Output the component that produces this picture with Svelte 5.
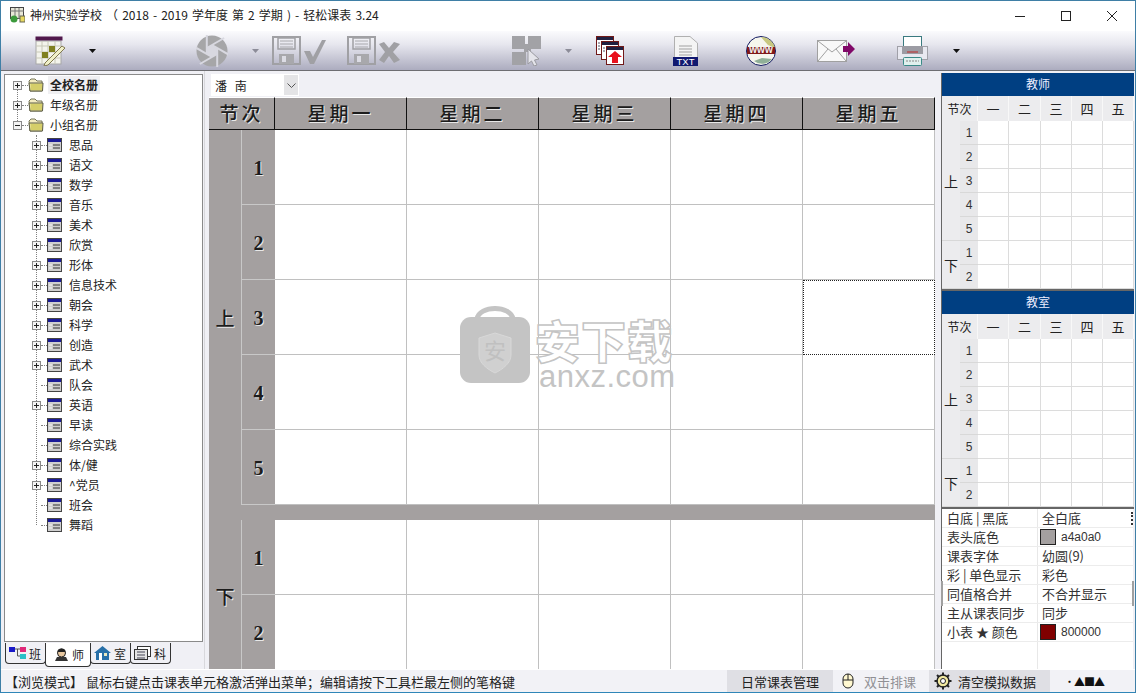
<script>
  const groups = [
    { name: '思品', plus: true }, { name: '语文', plus: true }, { name: '数学', plus: true },
    { name: '音乐', plus: true }, { name: '美术', plus: true }, { name: '欣赏', plus: true },
    { name: '形体', plus: true }, { name: '信息技术', plus: true }, { name: '朝会', plus: true },
    { name: '科学', plus: true }, { name: '创造', plus: true }, { name: '武术', plus: true },
    { name: '队会', plus: false }, { name: '英语', plus: true }, { name: '早读', plus: false },
    { name: '综合实践', plus: false }, { name: '体/健', plus: true }, { name: '^党员', plus: true },
    { name: '班会', plus: false }, { name: '舞蹈', plus: false }
  ];
  const roots = [
    { name: '全校名册', open: false, sel: true },
    { name: '年级名册', open: false },
    { name: '小组名册', open: true }
  ];
  const days = ['星期一', '星期二', '星期三', '星期四', '星期五'];
  const shortDays = ['一', '二', '三', '四', '五'];
  const cells = [0, 1, 2, 3, 4];
  const props = [
    { k: '白底 | 黑底', v: '全白底' },
    { k: '表头底色', v: 'a4a0a0', color: '#a4a0a0' },
    { k: '课表字体', v: '幼圆(9)' },
    { k: '彩 | 单色显示', v: '彩色' },
    { k: '同值格合并', v: '不合并显示' },
    { k: '主从课表同步', v: '同步' },
    { k: '小表 ★ 颜色', v: '800000', color: '#800000' }
  ];

  // aperture blades: each gap runs on from a corner of the centre hexagon
  const blades = [0, 1, 2, 3, 4, 5].map((i) => {
    const a = (i * 60 + 30) * Math.PI / 180;
    const b = a + Math.PI * 2 / 3;
    const x = 16 + 6 * Math.cos(a);
    const y = 16 + 6 * Math.sin(a);
    return { x, y, x2: x + 20 * Math.cos(b), y2: y + 20 * Math.sin(b) };
  });
  const hex = [0, 1, 2, 3, 4, 5]
    .map((i) => {
      const a = (i * 60 + 30) * Math.PI / 180;
      return `${16 + 6 * Math.cos(a)},${16 + 6 * Math.sin(a)}`;
    })
    .join(' ');
</script>

{#snippet expander(open)}
  <svg class="exp" width="9" height="9" viewBox="0 0 9 9">
    <rect x="0.5" y="0.5" width="8" height="8" fill="#f4f4f4" stroke="#8a8a8a" />
    <path d="M2 4.5h5" stroke="#222" />
    {#if !open}<path d="M4.5 2v5" stroke="#222" />{/if}
  </svg>
{/snippet}

{#snippet folder()}
  <svg width="16" height="14" viewBox="0 0 16 14">
    <path d="M1 3 L3 1 H7 L9 3 H14 V13 H2 Z" fill="#f4ecc0" stroke="#77775a" />
    <path d="M1 5 H15 L14.5 13 H2 Z" fill="#e6e08a" stroke="#5c5c48" />
    <path d="M3 7h11M3 9h11M3 11h11" stroke="#c4bc48" />
  </svg>
{/snippet}

{#snippet tableIcon()}
  <svg width="15" height="14" viewBox="0 0 15 14">
    <rect x="0.5" y="0.5" width="14" height="13" fill="#cfcfcf" stroke="#444" />
    <rect x="1" y="1" width="13" height="3" fill="#1a1a98" />
    <path d="M6 7h7M6 10h7" stroke="#333" />
    <path d="M2 7h3M2 10h3" stroke="#f4f4f4" />
  </svg>
{/snippet}

{#snippet caret(gray)}
  <svg class="caret" width="7" height="4" viewBox="0 0 7 4"><path d="M0 0h7L3.500 4z" fill={gray ? '#8c8c98' : '#111'} /></svg>
{/snippet}

{#snippet disk(x)}
  <path d="M{x + 1} 1 H{x + 28} V28 H{x + 1} Z" fill="none" stroke="#a0a0a4" stroke-width="2" />
  <path d="M{x + 6} 2 H{x + 23} V13 H{x + 6} Z" fill="none" stroke="#a0a0a4" stroke-width="1.500" />
  <path d="M{x + 8} 5h13M{x + 8} 8h13M{x + 8} 11h13" stroke="#a8a8ac" />
  <path d="M{x + 7} 18 H{x + 22} V28 H{x + 7} Z" fill="#a8a8ac" />
  <rect x={x + 10} y="20" width="4" height="6" fill="#dcdce4" />
{/snippet}

{#snippet miniTable(title)}
  <section class="mini">
    <div class="mini-title">{title}</div>
    <div class="mini-grid">
      <div class="mh first">节次</div>
      {#each shortDays as d}<div class="mh">{d}</div>{/each}
      <div class="mside am">上</div>
      <div class="mside pm">下</div>
      {#each [1, 2, 3, 4, 5, 1, 2] as n}
        <div class="mnum">{n}</div>
        {#each cells as c (c)}<div class="mcell"></div>{/each}
      {/each}
    </div>
  </section>
{/snippet}

<div class="window">
  <header class="titlebar">
    <svg class="appicon" width="16" height="16" viewBox="0 0 16 16">
      <rect x="1.500" y="0.500" width="13" height="11" fill="#e8e8d8" stroke="#444" />
      <path d="M1 4h14M6 1v11M10 1v11" stroke="#777" />
      <rect x="11" y="9" width="5" height="6" fill="#e6d860" stroke="#665" />
      <circle cx="5" cy="12" r="3.500" fill="#3c9a3c" />
    </svg>
    <span class="title">神州实验学校 （ 2018 - 2019 学年度 第 2 学期 ) - 轻松课表 3.24</span>
    <div class="winbtns">
      <svg width="12" height="12" viewBox="0 0 12 12"><path d="M1 6.500h10" stroke="#222" /></svg>
      <svg width="12" height="12" viewBox="0 0 12 12"><rect x="1.500" y="1.500" width="9" height="9" fill="none" stroke="#222" /></svg>
      <svg width="12" height="12" viewBox="0 0 12 12"><path d="M1 1l10 10M11 1L1 11" stroke="#222" /></svg>
    </div>
  </header>

  <div class="toolbar">
    <svg class="t-cal" width="30" height="30" viewBox="0 0 30 30">
      <rect x="1" y="5" width="25" height="23" fill="#f4f4ec" stroke="#a8a8a8" />
      <rect x="0.500" y="0.500" width="27" height="4" fill="#50184c" />
      <path d="M1 10h25M1 16h25M1 22h25M7 5v23M13 5v23M20 5v23" stroke="#c8c8b8" />
      <rect x="7" y="16" width="6" height="6" fill="#808020" />
      <rect x="14" y="10" width="6" height="6" fill="#808020" />
      <path d="M10 27 L27 10 L30 12 L13 29 L9 30 Z" fill="#f0f0c8" stroke="#807850" />
    </svg>
    <span class="t-c1">{@render caret(false)}</span>
    <svg class="t-ap" width="32" height="32" viewBox="0 0 32 32">
      <circle cx="16" cy="16" r="15.500" fill="#a6a6a8" />
      <polygon points={hex} fill="#d8d8e0" />
      {#each blades as b}
        <line x1={b.x} y1={b.y} x2={b.x2} y2={b.y2} stroke="#d8d8e0" stroke-width="2" />
      {/each}
    </svg>
    <span class="t-c2">{@render caret(true)}</span>
    <svg class="t-sv1" width="54" height="29" viewBox="0 0 54 29">
      {@render disk(0)}
      <path d="M32 15 L38 15 L41 21 L50 4 L54 4 L42 28 L38 28 Z" fill="#a0a0a4" />
    </svg>
    <svg class="t-sv2" width="54" height="29" viewBox="0 0 54 29">
      {@render disk(0)}
      <path d="M32 8 L37 6 L42 12 L47 6 L53 8 L46 16 L53 24 L47 27 L42 20 L37 27 L32 24 L38 16 Z" fill="#a0a0a4" />
    </svg>
    <svg class="t-pz" width="32" height="31" viewBox="0 0 32 31">
      <path d="M1 1H14V9H17V1H30V14H20V17H15V30H1V17H13V14H1Z" fill="#a2a2a6" />
      <path d="M17 14 L17 29 L20.500 26 L23 31 L26 30 L23.500 25 L28 24 Z" fill="#e4e4ea" stroke="#9a9aa0" />
    </svg>
    <span class="t-c3">{@render caret(true)}</span>
    <svg class="t-st" width="29" height="30" viewBox="0 0 29 30">
      <rect x="0.500" y="0.500" width="17" height="18" fill="#fff" stroke="#701818" />
      <rect x="1" y="1" width="16" height="3" fill="#202040" />
      <path d="M2 7h14M2 10h14M2 13h14" stroke="#556" stroke-dasharray="2 1" />
      <rect x="5.500" y="5.500" width="17" height="18" fill="#fff" stroke="#701818" />
      <rect x="6" y="6" width="16" height="3" fill="#202040" />
      <path d="M7 12h14M7 15h14" stroke="#556" stroke-dasharray="2 1" />
      <rect x="10.500" y="10.500" width="17" height="18" fill="#fff" stroke="#701818" />
      <rect x="11" y="11" width="16" height="3" fill="#202040" />
      <path d="M19 15 L26 21 H22 V27 H16 V21 H12 Z" fill="#e8101c" />
    </svg>
    <svg class="t-txt" width="26" height="30" viewBox="0 0 26 30">
      <path d="M1.500 .5H17L24.500 7V22H1.500Z" fill="#f4f4f4" stroke="#b0b0b0" />
      <path d="M6 10h13M6 13h13M6 16h13M6 19h13" stroke="#a0a0a0" />
      <rect x="0" y="21" width="25" height="9" fill="#101870" />
      <text x="12.500" y="29" class="txtlabel">TXT</text>
    </svg>
    <svg class="t-www" width="30" height="30" viewBox="0 0 30 30">
      <circle cx="15" cy="15" r="14.500" fill="#f6f6ee" stroke="#101860" />
      <path d="M15 1 A14 14 0 0 1 29 12 L22 9 Z" fill="#c8c880" />
      <path d="M8 25 A13 13 0 0 0 26 23 L16 22 Z" fill="#90b098" />
      <rect x="1" y="11" width="28" height="7" fill="#801818" />
      <text x="15" y="17" class="wwwlabel">www</text>
    </svg>
    <svg class="t-mail" width="38" height="22" viewBox="0 0 38 22">
      <rect x="0.500" y="0.500" width="29" height="21" fill="#f8f8f8" stroke="#a0a0a0" />
      <path d="M1 1L15 12L29 1M1 21L11 9M29 21L19 9" fill="none" stroke="#a0a0a0" />
      <path d="M26 6H31V2L38 9L31 16V12H26Z" fill="#800868" />
    </svg>
    <svg class="t-pr" width="31" height="30" viewBox="0 0 31 30">
      <rect x="6.500" y="0.500" width="18" height="12" fill="#fff" stroke="#3a7a80" />
      <rect x="0.500" y="10.500" width="30" height="13" fill="#e8e8f0" stroke="#a0a0a8" />
      <rect x="5" y="10" width="21" height="8" fill="#9c9ca4" />
      <path d="M10 16h11" stroke="#c02828" />
      <rect x="6.500" y="21.500" width="18" height="8" rx="1" fill="#e0f0ee" stroke="#3a8a88" />
      <path d="M9 25h13" stroke="#888" stroke-dasharray="2 1" />
    </svg>
    <span class="t-c4">{@render caret(false)}</span>
  </div>

  <div class="body">
    <aside class="left">
      <div class="tree">
        <span class="vline rootline"></span>
        <span class="vline childline"></span>
        {#each roots as r}
          <div class="node">
            {@render expander(r.open)}
            <i class="dots"></i>
            {@render folder()}
            <span class="label" class:sel={r.sel}>{r.name}</span>
          </div>
        {/each}
        {#each groups as g}
          <div class="node child">
            {#if g.plus}{@render expander(false)}{:else}<span class="noexp"></span>{/if}
            <i class="dots"></i>
            {@render tableIcon()}
            <span class="label">{g.name}</span>
          </div>
        {/each}
      </div>
      <div class="tabs">
        <div class="tab">
          <svg width="17" height="14" viewBox="0 0 17 14">
            <rect x="0" y="1" width="6" height="5" fill="#1818c8" />
            <rect x="11" y="1" width="6" height="5" fill="#e02878" />
            <rect x="11" y="8" width="6" height="5" fill="#28c0c8" />
            <path d="M6 3h5M8.500 3v7H11" stroke="#555" fill="none" />
          </svg>
          班
        </div>
        <div class="tab on">
          <svg width="15" height="14" viewBox="0 0 15 14">
            <circle cx="7.500" cy="5" r="4" fill="#e8c8a0" stroke="#222" />
            <path d="M3.500 4a4 3.500 0 0 1 8 0z" fill="#222" />
            <path d="M1 13h13l-2-4H3z" fill="#333" />
          </svg>
          师
        </div>
        <div class="tab">
          <svg width="17" height="14" viewBox="0 0 17 14">
            <path d="M0 7L8.500 0 17 7h-2v7H2V7z" fill="#2870a8" />
            <rect x="5" y="7" width="3" height="7" fill="#fff" />
            <rect x="10" y="7" width="3" height="3" fill="#e8e8c0" />
          </svg>
          室
        </div>
        <div class="tab">
          <svg width="17" height="14" viewBox="0 0 17 14">
            <rect x="3.500" y="0.500" width="13" height="10" fill="#fff" stroke="#333" />
            <rect x="0.500" y="3.500" width="13" height="10" fill="#e4e4e4" stroke="#333" />
            <path d="M3 6h8M3 9h8M3 12h8" stroke="#445" />
          </svg>
          科
        </div>
      </div>
    </aside>

    <main class="center">
      <div class="selectrow">
        <div class="select">
          <span>潘 南</span>
          <b class="drop"><svg width="9" height="5" viewBox="0 0 9 5"><path d="M.5 .5l4 4 4-4" fill="none" stroke="#555" /></svg></b>
        </div>
      </div>
      <div class="sheet">
        <div class="corner">节次</div>
        {#each days as d}<div class="day">{d}</div>{/each}

        <div class="half amhalf">上</div>
        {#each [1, 2, 3, 4, 5] as n, i}
          <div class="num">{n}</div>
          {#each cells as c (c)}
            <div class="cell" class:focus={i === 2 && c === 4}></div>
          {/each}
        {/each}

        <div class="sep"></div>

        <div class="half pmhalf">下</div>
        {#each [1, 2] as n}
          <div class="num">{n}</div>
          {#each cells as c (c)}<div class="cell"></div>{/each}
        {/each}
      </div>

      <div class="watermark">
        <svg width="70" height="82" viewBox="0 0 70 82">
          <path d="M17 17C19 3 51 3 53 17" fill="none" stroke="#c4c4c4" stroke-width="5" />
          <rect x="0" y="15" width="70" height="66" rx="11" fill="#c4c4c4" />
          <path d="M35 31L51 36V53C51 61 43 67 35 71C27 67 19 61 19 53V36Z" fill="#d0d0d0" stroke="#d8d8d8" />
          <text x="35" y="57" class="wm-mark">安</text>
        </svg>
        <div class="wm-text">
          <div class="wm-cn">安下载</div>
          <div class="wm-en">anxz.com</div>
        </div>
      </div>
    </main>

    <aside class="right">
      {@render miniTable('教师')}
      {@render miniTable('教室')}
      <div class="props">
        <span class="grip"></span>
        <span class="thumb lt"></span>
        <span class="thumb rt"></span>
        {#each props as p}
          <div class="prow">
            <div class="pk">{p.k}</div>
            <div class="pv">
              {#if p.color}<i class="swatch" style="background: {p.color}"></i>{/if}
              <span class:code={p.color}>{p.v}</span>
            </div>
          </div>
        {/each}
      </div>
    </aside>
  </div>

  <footer class="status">
    <div class="s-msg">【浏览模式】 鼠标右键点击课表单元格激活弹出菜单；编辑请按下工具栏最左侧的笔格键</div>
    <div class="s-seg s-mgr">日常课表管理</div>
    <div class="s-seg s-dbl">
      <svg width="12" height="16" viewBox="0 0 12 16">
        <rect x="1" y="1" width="10" height="14" rx="5" fill="#fff8d0" stroke="#222" />
        <path d="M1 7h10M6 1v6" stroke="#222" />
      </svg>
      双击排课
    </div>
    <div class="s-seg s-clr">
      <svg width="18" height="18" viewBox="0 0 18 18">
        <circle cx="9" cy="9" r="6" fill="#f0e8a0" stroke="#222" stroke-width="1.500" />
        <circle cx="9" cy="9" r="2.500" fill="#fff" stroke="#222" />
        <path d="M9 .5v3M9 14.500v3M.5 9h3M14.500 9h3M3 3l2 2M13 13l2 2M15 3l-2 2M5 13l-2 2" stroke="#222" stroke-width="2" />
      </svg>
      清空模拟数据
    </div>
    <div class="s-seg s-shapes">•▲■▲</div>
  </footer>
</div>

<style>
  :global(body) {
    margin: 0;
    overflow: hidden;
  }

  .window {
    width: 1136px;
    height: 693px;
    box-sizing: border-box;
    display: flex;
    flex-direction: column;
    overflow: hidden;
    position: relative;
    background: #f0f0f5;
    border-top: 1px solid #3f7fa6;
    border-left: 1px solid #3f7fa6;
    border-right: 1px solid #3f7fa6;
    border-bottom: 1px solid #2f86b8;
    font-family: "Noto Sans CJK SC", "Noto Sans", sans-serif;
    font-size: 12px;
    color: #222;
  }

  /* title bar */
  .titlebar {
    height: 30px;
    flex: none;
    box-sizing: border-box;
    display: flex;
    align-items: center;
    background: #fff;
    padding: 0 0 3px 8px;
  }
  .appicon {
    margin-right: 5px;
  }
  .title {
    font-size: 12px;
    color: #222;
    word-spacing: 1.4px;
  }
  .winbtns {
    margin-left: auto;
    display: flex;
    gap: 34px;
    padding: 3px 17px 0 0;
  }

  /* toolbar */
  .toolbar {
    height: 39px;
    flex: none;
    display: flex;
    align-items: center;
    background: linear-gradient(#fbfbfd, #e6e6ee 35%, #acacbf);
    border-bottom: 1px solid #6e6e72;
  }
  .toolbar svg {
    flex: none;
  }
  .toolbar span {
    display: flex;
  }
  .t-cal { margin-left: 34px; }
  .t-c1 { margin-left: 24px; }
  .t-ap { margin-left: 100px; }
  .t-c2 { margin-left: 24px; }
  .t-sv1 { margin-left: 13px; }
  .t-sv2 { margin-left: 21px; }
  .t-pz { margin-left: 110px; }
  .t-c3 { margin-left: 22px; }
  .t-st { margin-left: 24px; }
  .t-txt { margin-left: 48px; }
  .t-www { margin-left: 47px; }
  .t-mail { margin-left: 41px; }
  .t-pr { margin-left: 42px; }
  .t-c4 { margin-left: 25px; }
  .txtlabel {
    font-family: "Liberation Sans", sans-serif;
    font-size: 9.500px;
    fill: #fff;
    text-anchor: middle;
  }
  .wwwlabel {
    font-family: "Liberation Sans", sans-serif;
    font-size: 10px;
    font-weight: bold;
    fill: #f0f0f0;
    text-anchor: middle;
  }

  /* main area */
  .body {
    flex: 1;
    min-height: 0;
    display: flex;
    background: #f0f0f5;
  }

  .left {
    width: 204px;
    flex: none;
    box-sizing: border-box;
    padding: 3px 0 0 3px;
    display: flex;
    flex-direction: column;
    border-right: 1px solid #d8d8dc;
    background: #f0f0f5;
  }
  .tree {
    position: relative;
    height: 568px;
    flex: none;
    box-sizing: border-box;
    background: #fff;
    border: 1px solid #8a8a8a;
    box-shadow: 0 0 0 1px #fff inset;
    margin-right: 1px;
  }
  .node {
    height: 20px;
    display: flex;
    align-items: center;
    padding-left: 8px;
    position: relative;
    white-space: nowrap;
  }
  .node.child {
    padding-left: 27px;
  }
  .exp {
    flex: none;
    background: #fff;
    position: relative;
  }
  .noexp {
    width: 9px;
    flex: none;
  }
  .dots {
    width: 6px;
    height: 0;
    flex: none;
    border-top: 1px dotted #808080;
  }
  .label {
    margin-left: 4px;
    padding: 0 2px;
    font-size: 12px;
    line-height: 18px;
    color: #222;
  }
  .child .label {
    margin-left: 5px;
  }
  .label.sel {
    background: #f0f0f2;
    font-weight: 700;
  }
  .vline {
    position: absolute;
    width: 0;
    border-left: 1px dotted #808080;
  }
  .rootline {
    left: 12px;
    top: 10px;
    height: 40px;
  }
  .childline {
    left: 31px;
    top: 60px;
    height: 390px;
  }

  .tabs {
    display: flex;
    padding-left: 1px;
    height: 23px;
    margin-top: 1px;
  }
  .tab {
    display: flex;
    align-items: center;
    gap: 3px;
    padding: 0 4px 0 3px;
    height: 21px;
    box-sizing: border-box;
    border: 1px solid #333;
    border-top: none;
    border-radius: 0 0 4px 4px;
    background: #f0f0f5;
    font-size: 12px;
    margin-right: -1px;
  }
  .tab.on {
    height: 24px;
    background: #fff;
    padding: 0 6px 0 8px;
    position: relative;
    z-index: 1;
  }

  .center {
    width: 733px;
    flex: none;
    box-sizing: border-box;
    padding-left: 4px;
    position: relative;
    overflow: hidden;
  }
  .selectrow {
    height: 26px;
    padding: 3px 0 0 2px;
    box-sizing: border-box;
  }
  .select {
    width: 88px;
    height: 22px;
    display: flex;
    align-items: center;
    background: #fff;
    box-sizing: border-box;
    padding-left: 4px;
    justify-content: space-between;
    font-size: 12px;
  }
  .select span {
    letter-spacing: 2.500px;
  }
  .drop {
    width: 14px;
    height: 20px;
    background: #e4e4e6;
    display: flex;
    align-items: center;
    justify-content: center;
    margin-right: 1px;
  }

  .sheet {
    display: grid;
    grid-template-columns: 33px 33px repeat(5, 132px);
    grid-template-rows: 33px repeat(5, 75px) 15px repeat(2, 75px);
    background: #fff;
    width: 726px;
  }
  .corner,
  .day {
    background: #a4a0a0;
    color: #1c1c1c;
    display: flex;
    align-items: center;
    justify-content: center;
    font-size: 19px;
    font-weight: 500;
    letter-spacing: 3px;
    padding-bottom: 2px;
    text-shadow: 1px 1px 0 #e8e8e8;
    border-right: 1px solid #111;
    border-bottom: 1px solid #111;
    border-top: 1px solid #fff;
    box-sizing: border-box;
  }
  .corner {
    grid-column: 1 / 3;
  }
  .day:last-of-type {
    border-right: none;
  }
  .half {
    grid-column: 1;
    background: #a4a0a0;
    border-right: 1px solid #c8c8c8;
    display: flex;
    align-items: center;
    justify-content: center;
    font-size: 19px;
    font-weight: 500;
    color: #1c1c1c;
    text-shadow: 1px 1px 0 #e8e8e8;
  }
  .amhalf {
    grid-row: 2 / 7;
  }
  .pmhalf {
    grid-row: 8 / 10;
  }
  .num {
    grid-column: 2;
    background: #a4a0a0;
    border-bottom: 1px solid #c8c8c8;
    display: flex;
    align-items: center;
    justify-content: center;
    font-family: "Liberation Serif", serif;
    font-weight: 700;
    font-size: 20px;
    padding-top: 2px;
    box-sizing: border-box;
    color: #1c1c1c;
    text-shadow: 1px 1px 0 #e8e8e8;
  }
  .cell {
    background: #fff;
    border-right: 1px solid #c0c0c0;
    border-bottom: 1px solid #c0c0c0;
    box-sizing: border-box;
  }
  .cell.focus {
    border: 1px dotted #222;
  }
  .sep {
    grid-column: 1 / -1;
    background: #a4a0a0;
  }

  .watermark {
    position: absolute;
    left: 255px;
    top: 231px;
    display: flex;
    gap: 5px;
    pointer-events: none;
  }
  .wm-mark {
    font-size: 22px;
    fill: #c0c0c0;
    text-anchor: middle;
  }
  .wm-text {
    display: flex;
    flex-direction: column;
    margin-top: 14px;
  }
  .wm-cn {
    font-size: 45px;
    line-height: 48px;
    font-weight: 900;
    letter-spacing: 1px;
    color: #fff;
    -webkit-text-stroke: 1.5px #c4c4c4;
  }
  .wm-en {
    font-family: "Liberation Sans", sans-serif;
    font-size: 31px;
    line-height: 26px;
    color: #c4c4c4;
    letter-spacing: 0.5px;
    padding-left: 4px;
  }

  .right {
    width: 196px;
    flex: none;
    display: flex;
    flex-direction: column;
    box-sizing: border-box;
    padding: 2px 0 0 3px;
    background: #f0f0f5;
  }
  .mini {
    width: 192px;
    border-left: 1px solid #666;
    border-bottom: 2px solid #666;
    flex: none;
  }
  .mini-title {
    height: 23px;
    line-height: 22px;
    text-align: center;
    background: #003f82;
    color: #eef;
    font-size: 12px;
  }
  .mini-grid {
    display: grid;
    grid-template-columns: 18px 18px 31px 32px 31px 31px 31px;
    grid-template-rows: 25px repeat(7, 24px);
    background: #fff;
  }
  .mh {
    background: #ececee;
    border-right: 1px solid #f8f8f8;
    display: flex;
    align-items: center;
    justify-content: center;
    font-size: 13px;
  }
  .mh.first {
    grid-column: 1 / 3;
    font-size: 12px;
  }
  .mside {
    grid-column: 1;
    background: #ececee;
    display: flex;
    align-items: center;
    justify-content: center;
    font-size: 14px;
    border-bottom: 1px solid #d8d8d8;
  }
  .am { grid-row: 2 / 7; }
  .pm { grid-row: 7 / 9; }
  .mnum {
    grid-column: 2;
    background: #e8e8ea;
    display: flex;
    align-items: center;
    justify-content: center;
    font-family: "Liberation Sans", sans-serif;
    font-size: 12px;
    color: #333;
    border-bottom: 1px solid #d8d8d8;
  }
  .mcell {
    background: #fff;
    border-right: 1px solid #dcdcdc;
    border-bottom: 1px solid #dcdcdc;
  }

  .props {
    position: relative;
    flex: 1;
    width: 192px;
    background: #fff;
    border-left: 1px solid #666;
    box-sizing: border-box;
    background: linear-gradient(90deg, transparent 95px, #e8e8e8 95px, #e8e8e8 96px, transparent 96px) #fff;
  }
  .prow {
    height: 19px;
    display: flex;
    align-items: center;
    border-bottom: 1px solid #ececec;
    box-sizing: border-box;
    font-size: 13px;
    color: #333;
    padding-bottom: 1px;
  }
  .pk {
    width: 96px;
    padding-left: 5px;
    box-sizing: border-box;
    white-space: nowrap;
  }
  .pv {
    display: flex;
    align-items: center;
    padding-left: 4px;
    gap: 5px;
    white-space: nowrap;
  }
  .pv .code {
    font-size: 12px;
    font-family: "Liberation Sans", sans-serif;
  }
  .swatch {
    width: 16px;
    height: 16px;
    border: 1px solid #222;
    box-sizing: border-box;
    margin-left: -2px;
  }
  .grip {
    position: absolute;
    right: 0;
    top: 3px;
    height: 13px;
    border-right: 2px dotted #333;
  }
  .thumb {
    position: absolute;
    top: 72px;
    height: 25px;
    width: 2px;
    background: #a0a0a0;
  }
  .thumb.lt { left: -1px; }
  .thumb.rt { right: -1px; }

  .status {
    height: 23px;
    flex: none;
    display: flex;
    align-items: center;
    background: #f2f2f6;
    border-top: 1px solid #fff;
    box-sizing: border-box;
    font-size: 13px;
    white-space: nowrap;
  }
  .s-msg {
    width: 726px;
    padding-left: 4px;
    box-sizing: border-box;
    overflow: hidden;
  }
  .s-seg {
    height: 100%;
    display: flex;
    align-items: center;
    gap: 10px;
    box-sizing: border-box;
  }
  .s-mgr {
    width: 106px;
    background: #dfdfe4;
    justify-content: center;
  }
  .s-dbl {
    width: 94px;
    padding-left: 9px;
    color: #909094;
  }
  .s-clr {
    width: 121px;
    margin-left: 2px;
    background: #dfdfe4;
    padding-left: 5px;
    gap: 6px;
  }
  .s-shapes {
    width: 80px;
    justify-content: center;
    font-size: 11px;
    color: #111;
    letter-spacing: -1px;
    padding-right: 12px;
  }
</style>
